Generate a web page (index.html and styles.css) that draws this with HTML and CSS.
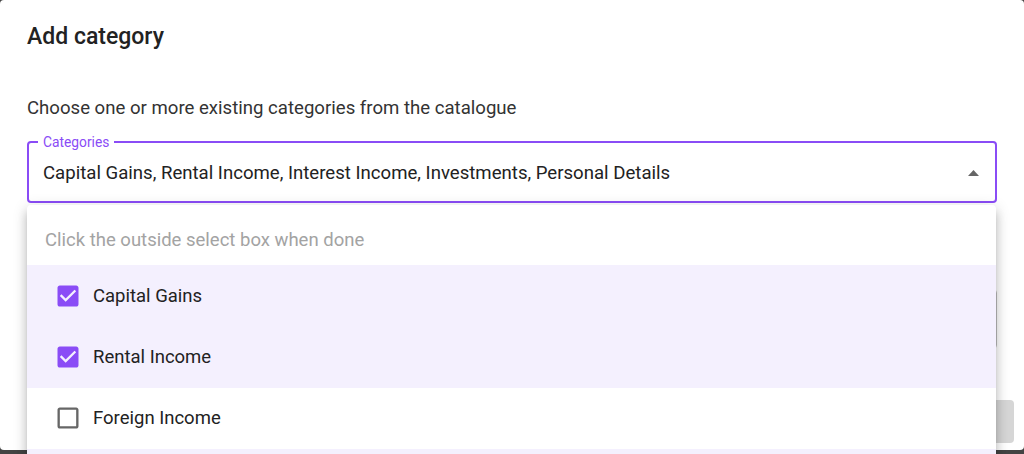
FILE: index.html
```html
<!DOCTYPE html>
<html lang="en">
<head>
<meta charset="utf-8">
<title>Add category</title>
<link rel="stylesheet" href="styles.css">
</head>
<body>
<div class="dialog">
  <h2 class="dialog-title">Add category</h2>
  <div class="dialog-content">
    <p class="desc">Choose one or more existing categories from the catalogue</p>
    <div class="select-wrap">
      <fieldset class="select">
        <legend class="select-label">Categories</legend>
        <span class="select-value">Capital Gains, Rental Income, Interest Income, Investments, Personal Details</span>
        <svg class="arrow" viewBox="0 0 11 6" width="11" height="6"><path d="M0 6 L5.5 0 L11 6 Z" fill="#666"/></svg>
      </fieldset>
      <div class="menu">
        <div class="menu-hint">Click the outside select box when done</div>
        <div class="menu-item selected">
          <svg class="cb" viewBox="0 0 24 24" width="28" height="28"><path fill="#8a4cf6" d="M19 3H5c-1.11 0-2 .9-2 2v14c0 1.1.89 2 2 2h14c1.11 0 2-.9 2-2V5c0-1.1-.89-2-2-2zm-9 14l-5-5 1.41-1.41L10 14.17l7.59-7.59L19 8l-9 9z"/></svg>
          <span>Capital Gains</span>
        </div>
        <div class="menu-item selected">
          <svg class="cb" viewBox="0 0 24 24" width="28" height="28"><path fill="#8a4cf6" d="M19 3H5c-1.11 0-2 .9-2 2v14c0 1.1.89 2 2 2h14c1.11 0 2-.9 2-2V5c0-1.1-.89-2-2-2zm-9 14l-5-5 1.41-1.41L10 14.17l7.59-7.59L19 8l-9 9z"/></svg>
          <span>Rental Income</span>
        </div>
        <div class="menu-item">
          <svg class="cb" viewBox="0 0 24 24" width="28" height="28"><path fill="#666" d="M19 5v14H5V5h14m0-2H5c-1.1 0-2 .9-2 2v14c0 1.1.9 2 2 2h14c1.1 0 2-.9 2-2V5c0-1.1-.9-2-2-2z"/></svg>
          <span>Foreign Income</span>
        </div>
        <div class="menu-item selected">
          <svg class="cb" viewBox="0 0 24 24" width="28" height="28"><path fill="#8a4cf6" d="M19 3H5c-1.11 0-2 .9-2 2v14c0 1.1.89 2 2 2h14c1.11 0 2-.9 2-2V5c0-1.1-.89-2-2-2zm-9 14l-5-5 1.41-1.41L10 14.17l7.59-7.59L19 8l-9 9z"/></svg>
          <span>Interest Income</span>
        </div>
      </div>
    </div>
    <div class="other-field"></div>
  </div>
  <div class="dialog-actions">
    <div class="btn"></div>
  </div>
</div>
</body>
</html>
```
FILE: styles.css
```css
html, body {
  margin: 0;
  padding: 0;
  height: 454px;
  overflow: hidden;
  background: #444;
  font-family: Roboto, "Liberation Sans", sans-serif;
}

.dialog {
  width: 1024px;
  height: 450px;
  background: #fff;
  border-radius: 4px;
  display: flex;
  flex-direction: column;
}

.dialog-title {
  margin: 0;
  padding: 20px 27px 0;
  font-size: 23px;
  font-weight: 500;
  line-height: 34px;
  color: #222;
}

.dialog-content {
  padding: 0 27px;
  display: flex;
  flex-direction: column;
}

.desc {
  margin: 41px 0 0;
  font-size: 18.6px;
  line-height: 26px;
  color: #333;
}

.select-wrap {
  position: relative;
  margin-top: 13px;
  z-index: 2;
}

.select {
  margin: 0;
  padding: 0 14px;
  height: 69px;
  box-sizing: border-box;
  border: 2px solid #8a4cf6;
  border-radius: 4px;
  display: flex;
  align-items: center;
}

.select-label {
  padding: 0 5px;
  margin-left: -5px;
  font-size: 13.8px;
  line-height: 16px;
  color: #8a4cf6;
}

.select-value {
  flex: 1;
  font-size: 18.6px;
  line-height: 26px;
  color: #222;
  margin-top: -6px;
}

.arrow {
  margin-right: 2px;
  margin-top: -6px;
}

.menu {
  position: absolute;
  left: 0;
  top: 71px;
  width: 969px;
  background: #fff;
  border-radius: 4px;
  box-shadow: 0 5px 5px -3px rgba(0,0,0,.2), 0 8px 10px 1px rgba(0,0,0,.14), 0 3px 14px 2px rgba(0,0,0,.12);
}

.menu-hint {
  padding: 22px 18px 12px;
  font-size: 18.5px;
  line-height: 26px;
  color: #a3a3a3;
}

.menu-item {
  height: 61.3px;
  display: flex;
  align-items: center;
  padding-left: 27px;
  gap: 11px;
  font-size: 18.5px;
  color: #222;
}

.menu-item.selected {
  background: #f4f0fe;
}

.cb {
  flex: none;
}

.other-field {
  margin-top: 86px;
  height: 58px;
  border: 1px solid #bdbdbd;
  border-radius: 4px;
}

.dialog-actions {
  margin-top: auto;
  padding: 0 10px 7px 0;
  display: flex;
  justify-content: flex-end;
}

.btn {
  width: 90px;
  height: 43px;
  background: #d6d6d6;
  border-radius: 4px;
}
```
